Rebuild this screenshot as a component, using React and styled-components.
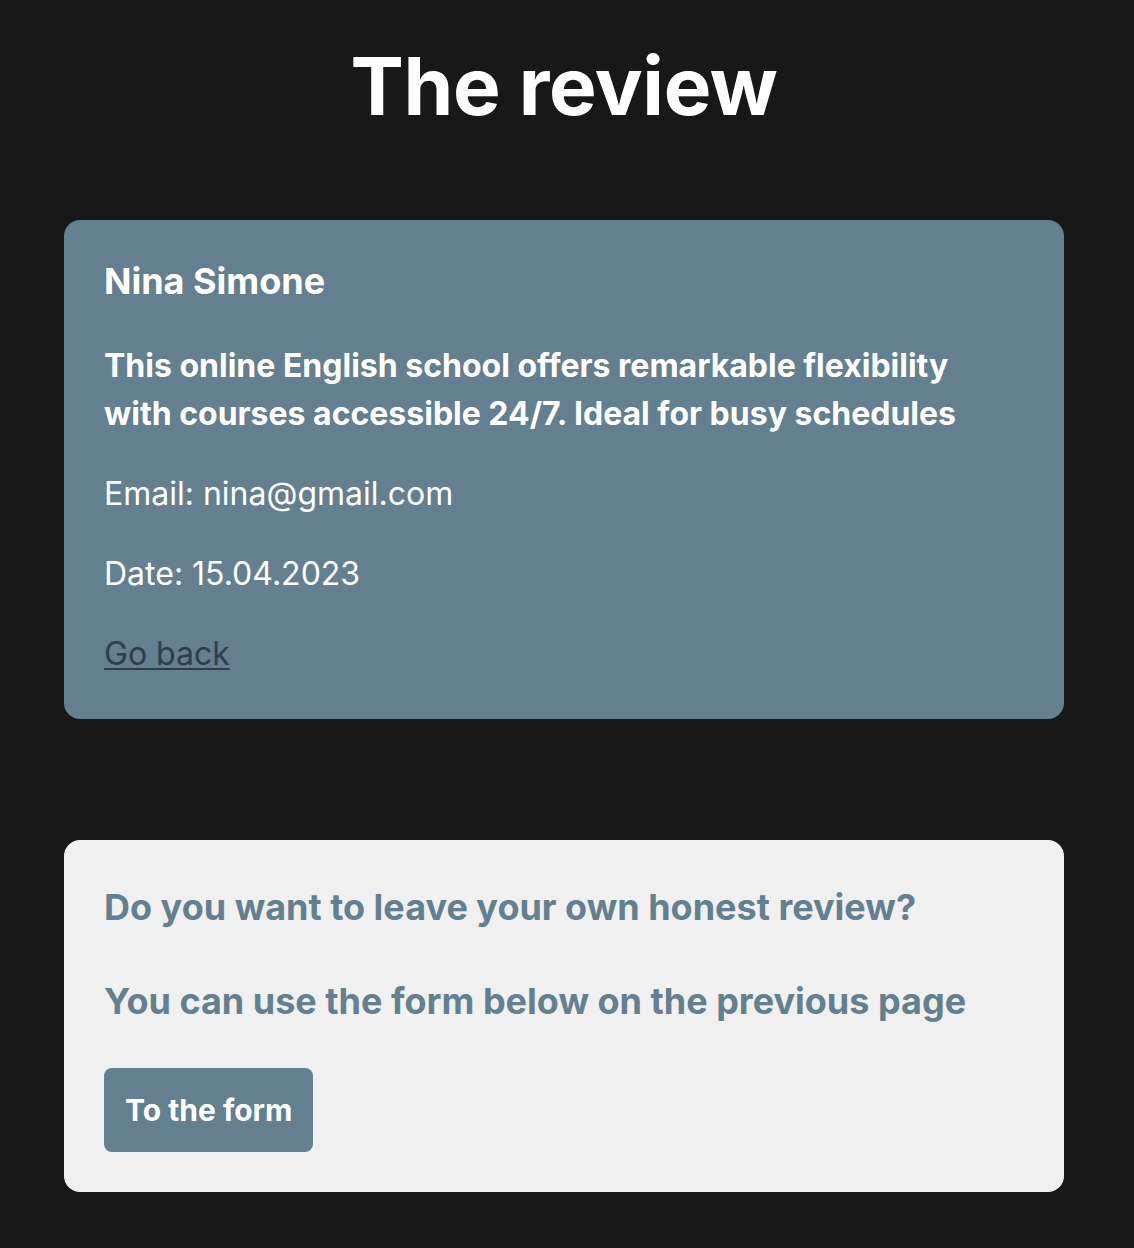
import React from 'react';
import styled, { createGlobalStyle } from 'styled-components';

const GlobalStyle = createGlobalStyle`
  * {
    box-sizing: border-box;
  }

  body {
    margin: 0;
    background: #181818;
    font-family: Inter, "Noto Sans", sans-serif;
    color: #ffffff;
  }
`;

const Page = styled.main`
  width: 1000px;
  margin: 0 64px;
  padding: 38px 0 56px;
  display: flex;
  flex-direction: column;
`;

const Title = styled.h1`
  margin: 0 0 86px;
  font-size: 80px;
  font-weight: 700;
  line-height: 96px;
  text-align: center;
  letter-spacing: -0.4px;
`;

const Card = styled.section`
  display: flex;
  flex-direction: column;
  align-items: flex-start;
  border-radius: 16px;
  padding: 40px;
  background: ${(p) => (p.$light ? '#f0f0f0' : '#647f8f')};
  color: ${(p) => (p.$light ? '#647f8f' : '#ffffff')};
`;

const ReviewCard = styled(Card)`
  margin-bottom: 121px;
  padding-bottom: 41px;
`;

const Name = styled.h2`
  margin: 0 0 39px;
  font-size: 36px;
  font-weight: 700;
  line-height: 43px;
`;

const Text = styled.p`
  margin: 0 0 32px;
  max-width: ${(p) => (p.$bold ? '880px' : 'none')};
  font-size: 32px;
  line-height: 48px;
  font-weight: ${(p) => (p.$bold ? 700 : 400)};
`;

const BackLink = styled.a`
  font-size: 32px;
  line-height: 48px;
  color: #2c3e50;
  text-decoration: underline;
  text-decoration-thickness: 2px;
  text-underline-offset: 3px;
`;

const Prompt = styled.h3`
  margin: 0 0 40px;
  font-size: 36px;
  font-weight: 700;
  line-height: 54px;
`;

const FormButton = styled.button`
  border: none;
  border-radius: 8px;
  padding: 0 21px;
  height: 84px;
  background: #647f8f;
  color: #ffffff;
  font-family: inherit;
  font-size: 30px;
  font-weight: 700;
  cursor: pointer;
`;

export default function App() {
  return (
    <>
      <GlobalStyle />
      <Page>
        <Title>The review</Title>
        <ReviewCard>
          <Name>Nina Simone</Name>
          <Text $bold>
            This online English school offers remarkable flexibility with courses accessible 24/7. Ideal for busy schedules
          </Text>
          <Text>Email: nina@gmail.com</Text>
          <Text>Date: 15.04.2023</Text>
          <BackLink href="#">Go back</BackLink>
        </ReviewCard>
        <Card $light>
          <Prompt>Do you want to leave your own honest review?</Prompt>
          <Prompt>You can use the form below on the previous page</Prompt>
          <FormButton>To the form</FormButton>
        </Card>
      </Page>
    </>
  );
}
